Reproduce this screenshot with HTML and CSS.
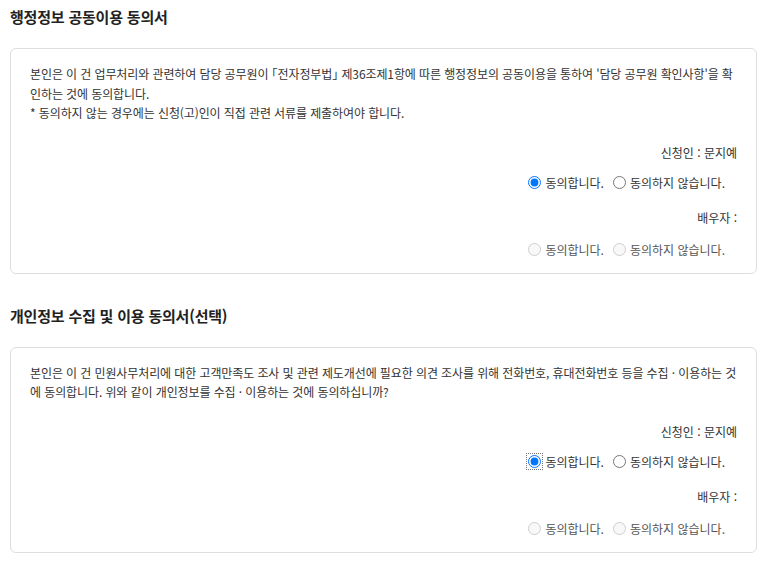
FILE: index.html
```html
<!DOCTYPE html>
<html lang="ko">
<head>
  <meta charset="UTF-8">
  <title>동의서</title>
  <link rel="stylesheet" href="styles.css">
</head>
<body>

  <h2 class="section-title">행정정보 공동이용 동의서</h2>
  <div class="agree-box">
    <p class="agree-text">본인은 이 건 업무처리와 관련하여 담당 공무원이 ｢전자정부법｣ 제36조제1항에 따른 행정정보의 공동이용을 통하여 '담당 공무원 확인사항'을 확인하는 것에 동의합니다.<br>* 동의하지 않는 경우에는 신청(고)인이 직접 관련 서류를 제출하여야 합니다.</p>

    <div class="agree-group">
      <div class="who">신청인 : 문지예</div>
      <div class="choices">
        <label><input type="radio" name="share1" checked> 동의합니다.</label>
        <label><input type="radio" name="share1"> 동의하지 않습니다.</label>
      </div>
    </div>

    <div class="agree-group">
      <div class="who">배우자 :</div>
      <div class="choices">
        <label class="off"><input type="radio" name="share2" disabled> 동의합니다.</label>
        <label class="off"><input type="radio" name="share2" disabled> 동의하지 않습니다.</label>
      </div>
    </div>
  </div>

  <h2 class="section-title next">개인정보 수집 및 이용 동의서(선택)</h2>
  <div class="agree-box">
    <p class="agree-text">본인은 이 건 민원사무처리에 대한 고객만족도 조사 및 관련 제도개선에 필요한 의견 조사를 위해 전화번호, 휴대전화번호 등을 수집 · 이용하는 것에 동의합니다. 위와 같이 개인정보를 수집 · 이용하는 것에 동의하십니까?</p>

    <div class="agree-group">
      <div class="who">신청인 : 문지예</div>
      <div class="choices">
        <label><input type="radio" name="privacy1" class="focused" checked> 동의합니다.</label>
        <label><input type="radio" name="privacy1"> 동의하지 않습니다.</label>
      </div>
    </div>

    <div class="agree-group">
      <div class="who">배우자 :</div>
      <div class="choices">
        <label class="off"><input type="radio" name="privacy2" disabled> 동의합니다.</label>
        <label class="off"><input type="radio" name="privacy2" disabled> 동의하지 않습니다.</label>
      </div>
    </div>
  </div>

</body>
</html>
```

FILE: styles.css
```css
body {
  margin: 0;
  padding: 7px 16px 0 10px;
  font-family: "Noto Sans CJK KR", "Noto Sans", sans-serif;
  color: #333;
  background-color: #fff;
}

.section-title {
  margin: 0 0 21px 0;
  font-size: 15px;
  line-height: 20px;
  font-weight: 700;
  letter-spacing: -0.2px;
  color: #222;
}

.section-title.next {
  margin-top: 32px;
}

.agree-box {
  border: 1px solid #dedede;
  border-radius: 6px;
  padding: 15px 19px 13px 19px;
}

.agree-text {
  margin: 0;
  font-size: 12px;
  line-height: 19.5px;
  letter-spacing: -0.1px;
}

.agree-group {
  margin-top: 20px;
}

.agree-group + .agree-group {
  margin-top: 15px;
}

.who {
  text-align: right;
  font-size: 12px;
  line-height: 20px;
}

.choices {
  margin-top: 10px;
  display: flex;
  justify-content: flex-end;
  padding-right: 12px;
  font-size: 12px;
  line-height: 20px;
}

.agree-group + .agree-group .choices {
  margin-top: 12px;
}

.choices label {
  display: flex;
  align-items: center;
  margin-left: 4px;
}

.choices input {
  margin: 0 4px 0 5px;
  width: 13px;
  height: 13px;
}

.choices label.off {
  color: #555;
}

/* focus ring left on the last clicked radio */
.focused {
  outline: 1px dotted #777;
  outline-offset: 1px;
}
```
